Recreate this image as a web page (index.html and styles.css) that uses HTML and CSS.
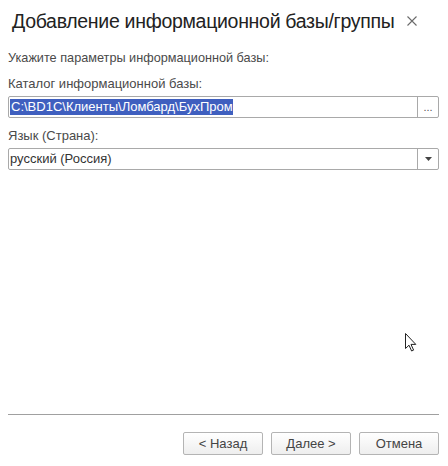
FILE: index.html
```html
<!DOCTYPE html>
<html lang="ru">
<head>
<meta charset="utf-8">
<link rel="stylesheet" href="styles.css">
</head>
<body>
<div class="dialog">
  <div class="header">
    <div class="title">Добавление информационной базы/группы</div>
    <div class="close">
      <svg width="10" height="10" viewBox="0 0 10 10"><path d="M0.5 0.5 L9.5 9.5 M9.5 0.5 L0.5 9.5" stroke="#6a6a6a" stroke-width="1.1" fill="none"/></svg>
    </div>
  </div>
  <div class="content">
    <div class="hint">Укажите параметры информационной базы:</div>
    <div class="label">Каталог информационной базы:</div>
    <div class="field">
      <div class="field-value"><span class="selected">C:\BD1C\Клиенты\Ломбард\БухПром</span></div>
      <div class="field-btn">...</div>
    </div>
    <div class="label">Язык (Страна):</div>
    <div class="field">
      <div class="field-value">русский (Россия)</div>
      <div class="field-btn"><svg width="7" height="4" viewBox="0 0 7 4"><path d="M0 0 H7 L3.5 4 Z" fill="#444"/></svg></div>
    </div>
  </div>
  <div class="footer">
    <div class="sep"></div>
    <div class="buttons">
      <div class="btn">&lt; Назад</div>
      <div class="btn">Далее &gt;</div>
      <div class="btn">Отмена</div>
    </div>
  </div>
  <svg class="cursor" width="12" height="19" viewBox="0 0 12 19"><path d="M0.5 0.5 V15.5 L4 12.2 L6.6 18 L8.6 17.1 L6 11.4 H10.8 Z" fill="#fff" stroke="#222" stroke-width="1"/></svg>
</div>
</body>
</html>
```
FILE: styles.css
```css
* { box-sizing: border-box; }
html, body { margin: 0; padding: 0; background: #fff; }
body { width: 448px; height: 466px; overflow: hidden; font-family: "Liberation Sans", Arial, sans-serif; }
.dialog { position: relative; width: 448px; height: 466px; display: flex; flex-direction: column; }
.header { display: flex; align-items: center; justify-content: space-between; height: 42px; padding: 0 31px 0 12px; }
.title { font-size: 19.5px; letter-spacing: -0.3px; color: #222; line-height: 23px; margin-top: 1px; white-space: nowrap; }
.close { width: 10px; height: 10px; display: flex; flex-shrink: 0; }
.content { padding: 0 9px 0 8px; display: flex; flex-direction: column; flex: 1; }
.hint { font-size: 12.7px; color: #4a4a4a; line-height: 15px; margin-top: 9px; }
.label { font-size: 13px; color: #4a4a4a; line-height: 15px; margin-top: 10px; margin-bottom: 5px; }
.field { display: flex; height: 22px; border: 1px solid #a9a9a9; border-radius: 2px; background: #fff; }
.field-value { flex: 1; font-size: 13px; color: #333; line-height: 20px; padding-left: 1px; white-space: nowrap; overflow: hidden; display: flex; align-items: center; }
.selected { background: #3f5fbf; color: #fff; line-height: 16px; padding: 0 0 0 1px; }
.field-btn { width: 21px; border-left: 1px solid #a9a9a9; display: flex; align-items: center; justify-content: center; font-size: 11px; color: #555; }
.footer { padding: 0 9px 11px 8px; }
.sep { height: 1px; background: #a0a0a0; margin-bottom: 17px; }
.buttons { display: flex; justify-content: flex-end; gap: 8px; }
.btn { width: 80px; height: 23px; border: 1px solid #b4b4b4; border-radius: 2px; background: linear-gradient(#ffffff, #eeeeee); font-size: 13px; color: #444; display: flex; align-items: center; justify-content: center; }
.cursor { position: absolute; left: 405px; top: 333px; }
```
